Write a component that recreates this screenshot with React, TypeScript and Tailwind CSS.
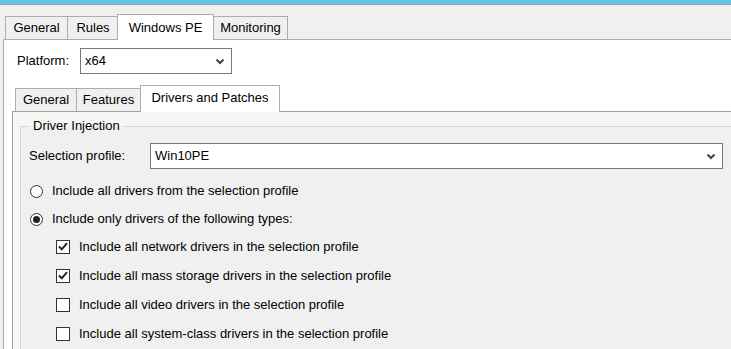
import React from "react";

const font = { fontFamily: '"Liberation Sans", Arial, sans-serif' };

function Chevron() {
  return (
    <svg width="10" height="7" viewBox="0 0 10 7" className="shrink-0">
      <path d="M1.5 1.5 L5 5 L8.5 1.5" stroke="#444" strokeWidth="2" fill="none" />
    </svg>
  );
}

function Select({ value, className }: { value: string; className: string }) {
  return (
    <div
      className={`flex h-[26px] items-center justify-between border border-[#7a7a7a] bg-white pl-[4px] pr-[6px] ${className}`}
    >
      <span>{value}</span>
      <Chevron />
    </div>
  );
}

function Radio({ checked, label }: { checked?: boolean; label: string }) {
  return (
    <div className="flex h-[28px] items-center">
      <span className="ml-[9px] flex h-[13px] w-[13px] items-center justify-center rounded-full border border-[#333] bg-white">
        {checked && <span className="h-[7px] w-[7px] rounded-full bg-[#222]" />}
      </span>
      <span className="ml-[9px]">{label}</span>
    </div>
  );
}

function Check({ checked, label }: { checked?: boolean; label: string }) {
  return (
    <div className="flex h-[29px] items-center">
      <span className="ml-[35px] flex h-[14px] w-[14px] items-center justify-center border border-[#333] bg-white">
        {checked && (
          <svg width="10" height="9" viewBox="0 0 10 9">
            <path d="M1 4.5 L3.8 7.3 L9 1.2" stroke="#222" strokeWidth="2" fill="none" />
          </svg>
        )}
      </span>
      <span className="ml-[9px]">{label}</span>
    </div>
  );
}

function Tab({ label, active, w }: { label: string; active?: boolean; w: string }) {
  if (active) {
    return (
      <div
        className={`relative z-10 -mx-px -mb-px flex h-[26px] items-center justify-center border border-b-0 border-[#acacac] bg-white ${w}`}
      >
        {label}
      </div>
    );
  }
  return (
    <div
      className={`flex h-[23px] items-center justify-center border border-b-0 border-r-0 border-[#acacac] bg-[#f0f0f0] first:border-l last:border-r ${w}`}
    >
      {label}
    </div>
  );
}

export default function App() {
  return (
    <div className="h-[349px] w-[731px] overflow-hidden bg-[#f0f0f0] text-[13px] text-black" style={font}>
      {/* title accent */}
      <div className="h-[5px] border-b border-[#8fa7b3] bg-[#63c6e8]" />

      {/* outer tab control */}
      <div className="pl-[5px] pt-[9px]">
        <div className="flex items-end">
          <Tab label="General" w="w-[62px]" />
          <Tab label="Rules" w="w-[51px]" />
          <Tab label="Windows PE" active w="w-[97px]" />
          <div className="flex h-[23px] w-[75px] items-center justify-center border border-b-0 border-[#acacac] bg-[#f0f0f0]">
            Monitoring
          </div>
        </div>
      </div>

      <div className="ml-[3px] border-l border-t border-[#acacac] bg-white">
        <div className="flex items-center pl-[13px] pt-[8px]">
          <span className="w-[63px]">Platform:</span>
          <Select value="x64" className="w-[152px]" />
        </div>

        {/* inner tab control */}
        <div className="pl-[11px] pt-[11px]">
          <div className="flex items-end">
            <div className="flex h-[23px] w-[61px] items-center justify-center border border-b-0 border-r-0 border-[#acacac] bg-[#f0f0f0]">
              General
            </div>
            <div className="flex h-[23px] w-[65px] items-center justify-center border border-b-0 border-[#acacac] bg-[#f0f0f0]">
              Features
            </div>
            <div className="relative z-10 -mb-px -ml-px flex h-[27px] w-[140px] items-center justify-center border border-b-0 border-[#acacac] bg-white pb-[2px]">
              Drivers and Patches
            </div>
          </div>
        </div>

        <div className="ml-[8px] border-l border-t border-[#a0a0a0] bg-[#f6f6f6] pl-[7px] pt-[7px]">
          {/* group box */}
          <fieldset className="m-0 border border-r-0 border-b-0 border-[#d5d5d5] bg-[#f0f0f0] p-0 pb-[20px]">
            <legend className="ml-[8px] px-[4px] leading-[14px]">Driver Injection</legend>
            <div className="flex items-center pl-[8px] pt-[10px]">
              <span className="w-[121px]">Selection profile:</span>
              <Select value="Win10PE" className="w-[573px]" />
            </div>
            <div className="pt-[8px]">
              <Radio label="Include all drivers from the selection profile" />
              <Radio checked label="Include only drivers of the following types:" />
              <div className="-mt-px">
                <Check checked label="Include all network drivers in the selection profile" />
                <Check checked label="Include all mass storage drivers in the selection profile" />
                <Check label="Include all video drivers in the selection profile" />
                <Check label="Include all system-class drivers in the selection profile" />
              </div>
            </div>
          </fieldset>
        </div>
      </div>
    </div>
  );
}
